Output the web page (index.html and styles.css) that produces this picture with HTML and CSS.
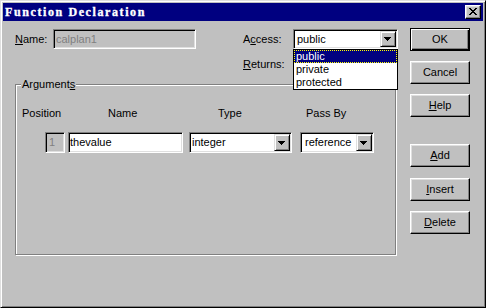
FILE: index.html
```html
<!DOCTYPE html>
<html>
<head>
<meta charset="utf-8">
<link rel="stylesheet" href="styles.css">
</head>
<body>
<div class="window">
  <div class="titlebar">
    <span class="title">Function Declaration</span>
    <span class="close-btn">
      <svg class="close-glyph" width="8" height="7" viewBox="0 0 8 7" shape-rendering="crispEdges"><path d="M0 0h2v1h-2zM6 0h2v1h-2zM1 1h2v1h-2zM5 1h2v1h-2zM2 2h4v1h-4zM3 3h2v1h-2zM2 4h4v1h-4zM1 5h2v1h-2zM5 5h2v1h-2zM0 6h2v1h-2zM6 6h2v1h-2z" fill="#000"/></svg>
    </span>
  </div>
  <div class="dlg-body">
    <div class="main">
      <div class="row1">
        <span class="lbl lbl-name"><u>N</u>ame:</span>
        <div class="edit disabled name-field">calplan1</div>
        <span class="lbl lbl-access">A<u>c</u>cess:</span>
        <div class="combo access-combo">
          <span class="combo-text">public</span>
          <span class="drop-btn"><svg width="7" height="4" viewBox="0 0 7 4" shape-rendering="crispEdges"><path d="M0 0h7v1h-7zM1 1h5v1h-5zM2 2h3v1h-3zM3 3h1v1h-1z" fill="#000"/></svg></span>
          <ul class="droplist">
            <li class="opt selected">public</li>
            <li class="opt">private</li>
            <li class="opt">protected</li>
          </ul>
        </div>
      </div>
      <div class="row2">
        <span class="lbl lbl-returns"><u>R</u>eturns:</span>
        <div class="combo returns-combo">
          <span class="combo-text"></span>
          <span class="drop-btn"><svg width="7" height="4" viewBox="0 0 7 4" shape-rendering="crispEdges"><path d="M0 0h7v1h-7zM1 1h5v1h-5zM2 2h3v1h-3zM3 3h1v1h-1z" fill="#000"/></svg></span>
        </div>
      </div>
      <div class="group">
        <span class="legend">Argument<u>s</u></span>
        <div class="headers">
          <span class="h-pos">Position</span>
          <span class="h-name">Name</span>
          <span class="h-type">Type</span>
          <span class="h-pass">Pass By</span>
        </div>
        <div class="arg-row">
          <div class="edit disabled pos-field">1</div>
          <div class="edit name-edit">thevalue</div>
          <div class="combo type-combo">
            <span class="combo-text tight">integer</span>
            <span class="drop-btn"><svg width="7" height="4" viewBox="0 0 7 4" shape-rendering="crispEdges"><path d="M0 0h7v1h-7zM1 1h5v1h-5zM2 2h3v1h-3zM3 3h1v1h-1z" fill="#000"/></svg></span>
          </div>
          <div class="combo pass-combo">
            <span class="combo-text">reference</span>
            <span class="drop-btn"><svg width="7" height="4" viewBox="0 0 7 4" shape-rendering="crispEdges"><path d="M0 0h7v1h-7zM1 1h5v1h-5zM2 2h3v1h-3zM3 3h1v1h-1z" fill="#000"/></svg></span>
          </div>
        </div>
      </div>
    </div>
    <div class="buttons">
      <div class="btn default btn-ok">OK</div>
      <div class="btn btn-cancel">Cancel</div>
      <div class="btn btn-help"><u>H</u>elp</div>
      <div class="btn btn-add"><u>A</u>dd</div>
      <div class="btn btn-insert"><u>I</u>nsert</div>
      <div class="btn btn-delete"><u>D</u>elete</div>
    </div>
  </div>
</div>
</body>
</html>
```
FILE: styles.css
```css
* { box-sizing: border-box; }
html, body { margin: 0; padding: 0; }
body {
  width: 486px;
  height: 308px;
  overflow: hidden;
  background: #c0c0c0;
  font-family: "Liberation Sans", Arial, sans-serif;
  font-size: 11px;
  line-height: 13px;
  color: #000;
}
u { text-decoration: underline; text-underline-offset: 1px; }

.window {
  width: 486px;
  height: 308px;
  background: #c0c0c0;
  border: 1px solid;
  border-color: #dfdfdf #000 #000 #dfdfdf;
  box-shadow: inset 1px 1px #fff, inset -1px -1px #808080;
  padding: 2px;
}

.titlebar {
  height: 18px;
  background: #000080;
  display: flex;
  align-items: center;
  justify-content: space-between;
  padding: 0 2px;
}
.title {
  color: #fff;
  font-family: "Liberation Serif", "Times New Roman", serif;
  font-weight: bold;
  font-size: 12px;
  letter-spacing: 1.6px;
  line-height: 18px;
  -webkit-text-stroke: 0.35px #fff;
}
.close-btn {
  width: 16px;
  height: 14px;
  background: #c0c0c0;
  border: 1px solid;
  border-color: #fff #000 #000 #fff;
  box-shadow: inset -1px -1px #808080, inset 1px 1px #dfdfdf;
}
.close-glyph { display: block; margin: 2px 0 0 3px; }

.dlg-body {
  display: flex;
  padding: 7px 0 0 12px;
}
.main {
  width: 383px;
  padding-top: 1px;
}

.row1 {
  display: flex;
  align-items: center;
  height: 20px;
}
.lbl-name { width: 38px; }
.lbl-access { width: 50px; margin-left: 47px; }
.name-field { width: 143px; height: 20px; }

.row2 {
  display: flex;
  align-items: center;
  height: 21px;
  margin-top: 5px;
  padding-left: 228px;
}
.lbl-returns { width: 50px; }

.edit {
  background: #fff;
  border: 1px solid;
  border-color: #808080 #fff #fff #808080;
  box-shadow: inset 1px 1px #000, inset -1px -1px #dfdfdf;
  padding: 0 2px;
  display: flex;
  align-items: center;
  white-space: nowrap;
  overflow: hidden;
}
.edit.disabled { background: #c0c0c0; color: #808080; }

.combo {
  position: relative;
  display: flex;
  background: #fff;
  border: 1px solid;
  border-color: #808080 #fff #fff #808080;
  box-shadow: inset 1px 1px #000, inset -1px -1px #dfdfdf;
  padding: 1px;
}
.combo-text {
  flex: 1;
  display: flex;
  align-items: center;
  padding-left: 2px;
  white-space: nowrap;
}
.combo-text.tight { padding-left: 1px; }
.drop-btn {
  width: 16px;
  background: #c0c0c0;
  border: 1px solid;
  border-color: #dfdfdf #000 #000 #dfdfdf;
  box-shadow: inset 1px 1px #fff, inset -1px -1px #808080;
  display: flex;
  align-items: center;
  justify-content: center;
}
.drop-btn svg { display: block; margin-left: -1px; }

.access-combo { width: 105px; height: 20px; }
.returns-combo { width: 105px; height: 21px; }

.droplist {
  position: absolute;
  top: 19px;
  left: -1px;
  width: 105px;
  margin: 0;
  padding: 0;
  list-style: none;
  background: #fff;
  border: 1px solid #000;
  z-index: 5;
}
.opt {
  height: 13px;
  line-height: 13px;
  padding-left: 2px;
}
.opt.selected {
  background: #000080;
  color: #fff;
  outline: 1px dotted #ffff00;
  outline-offset: -1px;
}

.group {
  position: relative;
  margin-top: 9px;
  width: 381px;
  height: 171px;
  border: 1px solid #808080;
  box-shadow: inset 1px 1px #fff, 1px 1px 0 #fff;
  padding: 22px 0 0 6px;
}
.legend {
  position: absolute;
  top: -7px;
  left: 5px;
  padding: 0 1px;
  background: #c0c0c0;
  line-height: 13px;
}
.headers {
  display: flex;
  height: 13px;
}
.h-pos { width: 86px; }
.h-name { width: 110px; }
.h-type { width: 88px; }

.arg-row {
  display: flex;
  height: 21px;
  margin-top: 12px;
  padding-left: 23px;
}
.pos-field { width: 20px; padding-left: 3px; }
.name-edit { width: 115px; margin-left: 3px; padding-left: 1px; }
.type-combo { width: 103px; margin-left: 6px; }
.pass-combo { width: 74px; margin-left: 8px; }
.pass-combo .combo-text { padding-left: 3px; }

.buttons {
  display: flex;
  flex-direction: column;
  width: 60px;
  margin-left: 12px;
}
.btn {
  height: 23px;
  background: #c0c0c0;
  border: 1px solid;
  border-color: #fff #000 #000 #fff;
  box-shadow: inset -1px -1px #808080, inset 1px 1px #dfdfdf;
  display: flex;
  align-items: center;
  justify-content: center;
}
.btn.default {
  border: 1px solid #000;
  box-shadow: inset 1px 1px #fff, inset -1px -1px #000, inset -2px -2px #808080;
}
.btn-cancel { margin-top: 10px; }
.btn-help { margin-top: 10px; }
.btn-add { margin-top: 27px; }
.btn-insert { margin-top: 11px; }
.btn-delete { margin-top: 10px; }
```
